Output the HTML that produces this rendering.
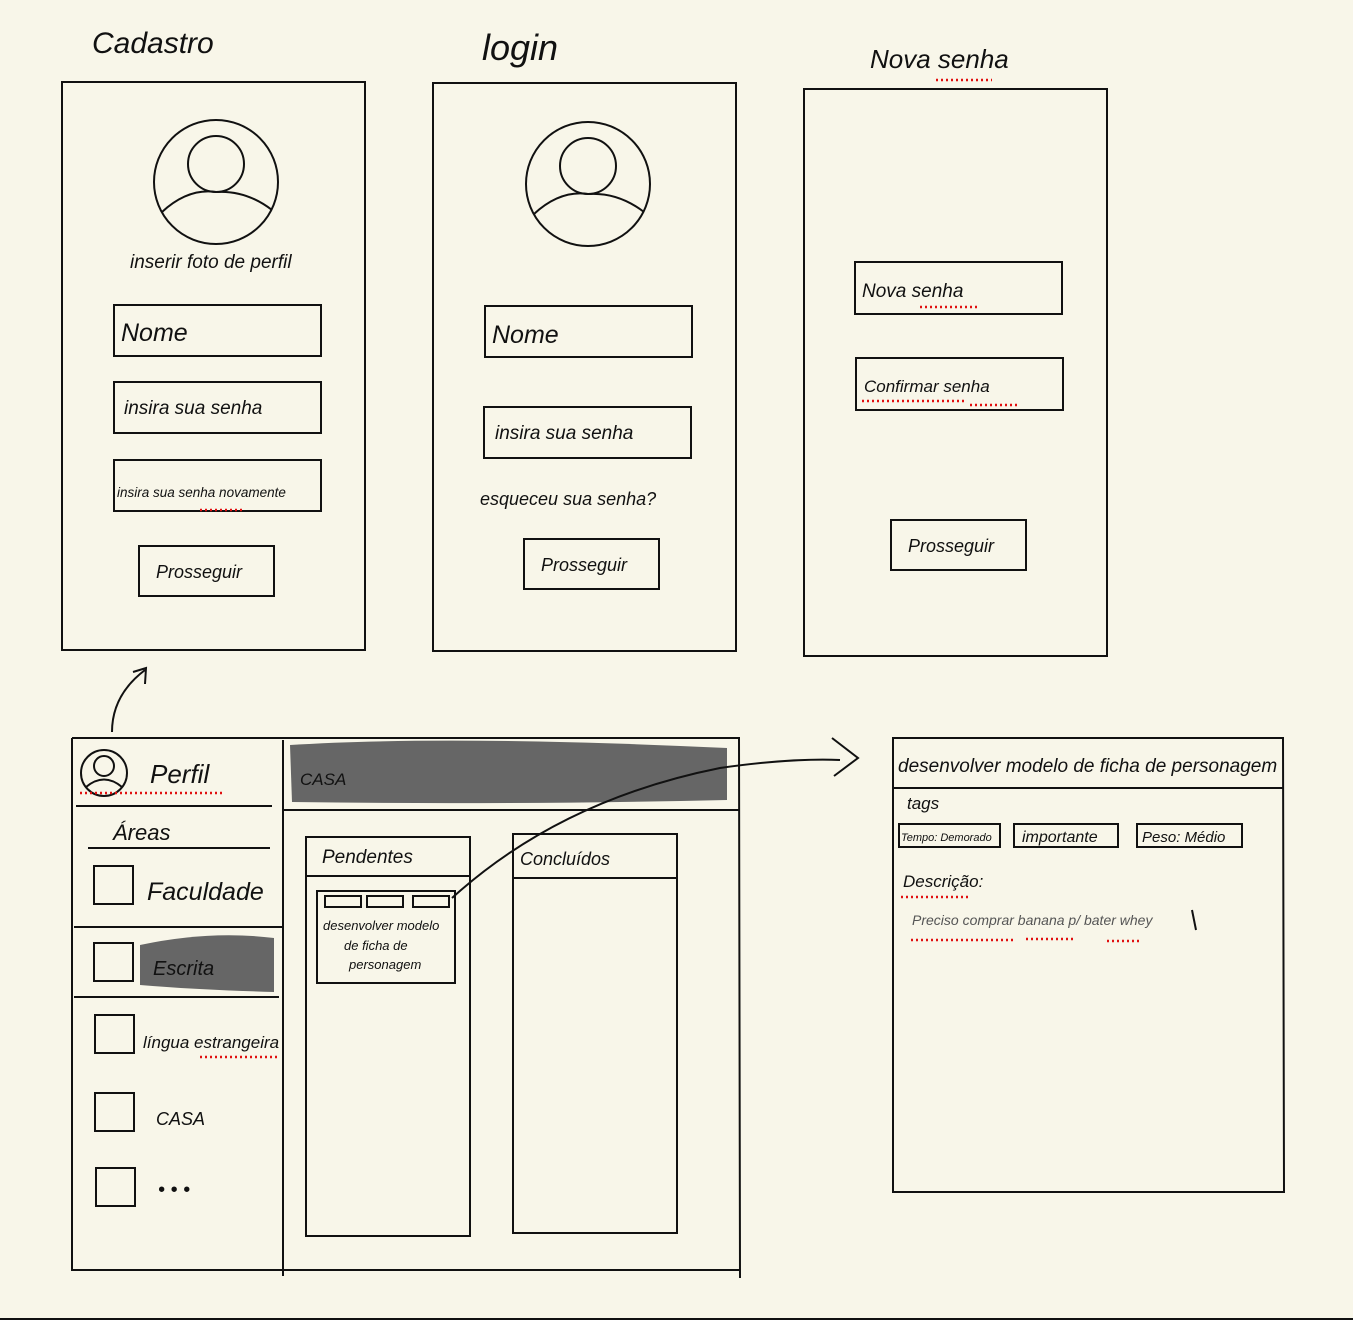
<!DOCTYPE html><html><head><meta charset="utf-8"><style>
html,body{margin:0;padding:0;background:#f8f6e9;}
svg{display:block}
text{font-family:"Liberation Sans",sans-serif;fill:#111;font-style:italic}
</style></head><body>
<svg width="1353" height="1320" viewBox="0 0 1353 1320" xmlns="http://www.w3.org/2000/svg">
<rect width="1353" height="1320" fill="#f8f6e9"/>
<rect y="1318" width="1353" height="2" fill="#111"/>
<path d="M290 745 Q450 735 727 748 L727 800 Q500 805 292 802 Z" fill="#666"/>
<path d="M140 945 Q210 930 274 938 L274 992 Q200 990 140 985 Z" fill="#666"/>
<g fill="none" stroke="#111" stroke-width="2">
<rect x="62" y="82" width="303" height="568"/>
<circle cx="216" cy="182" r="62"/><circle cx="216" cy="164" r="28"/>
<path d="M162 212 Q188 188 216 192 Q246 190 272 210"/>
<rect x="114" y="305" width="207" height="51"/>
<rect x="114" y="382" width="207" height="51"/>
<rect x="114" y="460" width="207" height="51"/>
<rect x="139" y="546" width="135" height="50"/>
<rect x="433" y="83" width="303" height="568"/>
<circle cx="588" cy="184" r="62"/><circle cx="588" cy="166" r="28"/>
<path d="M534 214 Q560 190 588 194 Q618 192 644 212"/>
<rect x="485" y="306" width="207" height="51"/>
<rect x="484" y="407" width="207" height="51"/>
<rect x="524" y="539" width="135" height="50"/>
<rect x="804" y="89" width="303" height="567"/>
<rect x="855" y="262" width="207" height="52"/>
<rect x="856" y="358" width="207" height="52"/>
<rect x="891" y="520" width="135" height="50"/>
<path d="M112 732 Q112 695 145 670 M133 672 L146 668 L145 684"/>
<path d="M72 738 L739 738 L740 1278 M72 738 L72 1270 L740 1270 M283 740 L283 1276 M283 810 L739 810"/>
<circle cx="104" cy="773" r="23"/><circle cx="104" cy="766" r="10"/><path d="M86 787 Q104 772 122 787"/>
<path d="M76 806 L272 806 M88 848 L270 848 M74 927 L283 927 M74 997 L279 997"/>
<rect x="94" y="866" width="39" height="38"/>
<rect x="94" y="943" width="39" height="38"/>
<rect x="95" y="1015" width="39" height="38"/>
<rect x="95" y="1093" width="39" height="38"/>
<rect x="96" y="1168" width="39" height="38"/>
<rect x="306" y="837" width="164" height="399"/><path d="M306 876 L470 876"/>
<rect x="513" y="834" width="164" height="399"/><path d="M513 878 L677 878"/>
<rect x="317" y="891" width="138" height="92"/>
<rect x="325" y="896" width="36" height="11"/><rect x="367" y="896" width="36" height="11"/><rect x="413" y="896" width="36" height="11"/>
<path d="M452 898 Q560 800 720 768 Q790 758 840 760 M832 738 L858 758 L834 776"/>
<path d="M893 738 L1283 738 L1284 1192 L893 1192 Z M893 788 L1283 788"/>
<rect x="899" y="824" width="101" height="23"/>
<rect x="1014" y="824" width="104" height="23"/>
<rect x="1137" y="824" width="105" height="23"/>
<path d="M1192 910 L1196 930"/>
</g>
<g stroke="#e01010" stroke-width="2.5" stroke-dasharray="2 3" fill="none">
<path d="M936 80 L992 80 M920 307 L977 307 M862 401 L964 401 M970 405 L1017 405 M200 510 L244 510 M80 793 L225 793 M200 1057 L279 1057 M901 897 L971 897 M911 940 L1015 940 M1026 939 L1075 939 M1107 941 L1140 941"/>
</g>
<g>
<text x="92" y="53" font-size="30">Cadastro</text>
<text x="482" y="60" font-size="36">login</text>
<text x="870" y="68" font-size="26">Nova senha</text>
<text x="130" y="268" font-size="19">inserir foto de perfil</text>
<text x="121" y="341" font-size="25">Nome</text>
<text x="124" y="414" font-size="19">insira sua senha</text>
<text x="117" y="497" font-size="13.5">insira sua senha novamente</text>
<text x="156" y="578" font-size="18">Prosseguir</text>
<text x="492" y="343" font-size="25">Nome</text>
<text x="495" y="439" font-size="19">insira sua senha</text>
<text x="480" y="505" font-size="18">esqueceu sua senha?</text>
<text x="541" y="571" font-size="18">Prosseguir</text>
<text x="862" y="297" font-size="19">Nova senha</text>
<text x="864" y="392" font-size="17">Confirmar senha</text>
<text x="908" y="552" font-size="18">Prosseguir</text>
<text x="150" y="783" font-size="26">Perfil</text>
<text x="113" y="840" font-size="22">Áreas</text>
<text x="147" y="900" font-size="25">Faculdade</text>
<text x="153" y="975" font-size="20">Escrita</text>
<text x="143" y="1048" font-size="17">língua estrangeira</text>
<text x="156" y="1125" font-size="18">CASA</text>
<text x="158" y="1196" font-size="20">• • •</text>
<text x="300" y="785" font-size="17">CASA</text>
<text x="322" y="863" font-size="19">Pendentes</text>
<text x="520" y="865" font-size="18">Concluídos</text>
<text x="323" y="930" font-size="13">desenvolver modelo</text>
<text x="344" y="950" font-size="13">de ficha de</text>
<text x="349" y="969" font-size="13">personagem</text>
<text x="898" y="772" font-size="19">desenvolver modelo de ficha de personagem</text>
<text x="907" y="809" font-size="17">tags</text>
<text x="901" y="841" font-size="11">Tempo: Demorado</text>
<text x="1022" y="842" font-size="16">importante</text>
<text x="1142" y="842" font-size="15">Peso: Médio</text>
<text x="903" y="887" font-size="17">Descrição:</text>
<text x="912" y="925" font-size="14" style="fill:#555">Preciso comprar banana p/ bater whey</text>
</g>
</svg>
</body></html>
